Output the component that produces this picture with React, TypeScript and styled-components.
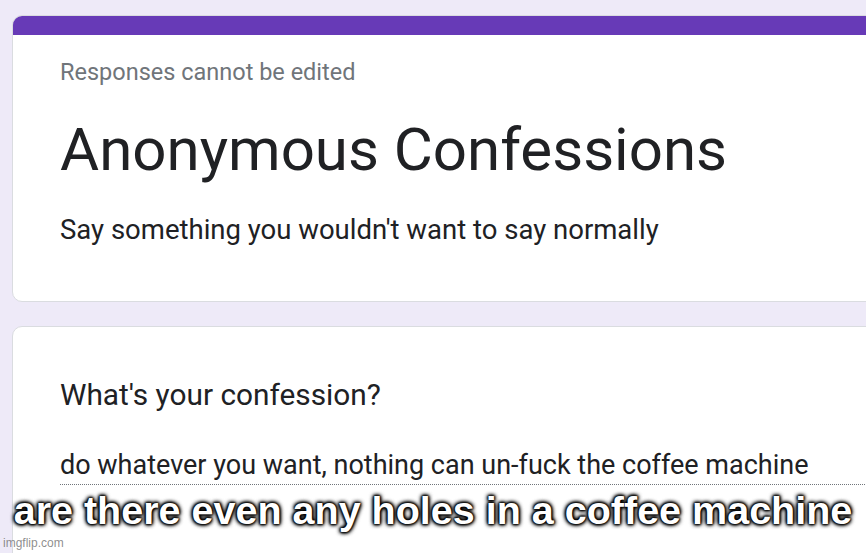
import styled, { createGlobalStyle } from "styled-components";

const Global = createGlobalStyle`
  html, body {
    margin: 0;
    padding: 0;
    background: #eeeaf8;
    overflow: hidden;
  }
`;

const App = () => {
  return (
    <Page>
      <Global />
      <Column>
        <Card>
          <TopBar />
          <HeaderBody>
            <Notice>Responses cannot be edited</Notice>
            <Title>Anonymous Confessions</Title>
            <Description>Say something you wouldn't want to say normally</Description>
          </HeaderBody>
        </Card>
        <Card>
          <QuestionBody>
            <Question>What's your confession?</Question>
            <Answer>do whatever you want, nothing can un-fuck the coffee machine</Answer>
          </QuestionBody>
        </Card>
      </Column>
      <Caption>are there even any holes in a coffee machine</Caption>
      <Watermark>imgflip.com</Watermark>
    </Page>
  );
};

export default App;

const Page = styled.div`
  position: relative;
  width: 866px;
  height: 553px;
  overflow: hidden;
  background: #eeeaf8;
  font-family: Roboto, "Liberation Sans", sans-serif;
`;

const Column = styled.div`
  display: flex;
  flex-direction: column;
  gap: 24px;
  padding: 15px 0 0 12px;
  width: 920px;
`;

const Card = styled.div`
  background: #ffffff;
  border: 1px solid #dadce0;
  border-radius: 10px;
  overflow: hidden;
`;

const TopBar = styled.div`
  height: 19px;
  background: #673ab7;
`;

const HeaderBody = styled.div`
  display: flex;
  flex-direction: column;
  padding: 23px 47px 54px;
`;

const Notice = styled.div`
  font-size: 23.5px;
  color: #70757a;
  line-height: 28px;
`;

const Title = styled.div`
  margin-top: 29px;
  font-size: 60px;
  color: #202124;
  line-height: 70px;
`;

const Description = styled.div`
  margin-top: 28px;
  font-size: 27.5px;
  color: #202124;
  line-height: 34px;
`;

const QuestionBody = styled.div`
  display: flex;
  flex-direction: column;
  padding: 50px 0 120px 47px;
`;

const Question = styled.div`
  font-size: 29.8px;
  color: #202124;
  line-height: 36px;
`;

const Answer = styled.div`
  margin-top: 35px;
  font-size: 27px;
  color: #202124;
  line-height: 34px;
  padding-bottom: 2px;
  border-bottom: 1px dotted #70757a;
`;

const Caption = styled.div`
  position: absolute;
  left: 0;
  right: 0;
  top: 487px;
  text-align: center;
  font-family: "Liberation Sans", Arial, sans-serif;
  font-weight: bold;
  font-size: 39.5px;
  line-height: 46px;
  color: #ffffff;
  text-shadow: 0 0 5px #000, 0 0 5px #000, 0 0 4px #000, 0 0 3px #000, 0 0 2px #000,
    0 0 2px #000;
`;

const Watermark = styled.div`
  position: absolute;
  left: 3px;
  bottom: 3px;
  font-family: "Liberation Sans", Arial, sans-serif;
  font-size: 12px;
  color: rgba(120, 120, 120, 0.85);
`;
